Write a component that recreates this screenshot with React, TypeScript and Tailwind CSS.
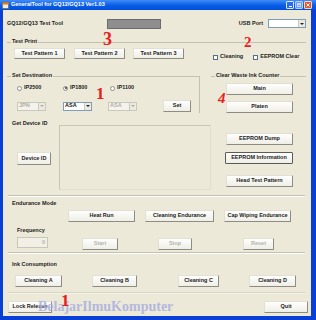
import React from 'react';

type BtnProps = { className?: string; children?: React.ReactNode; disabled?: boolean; focused?: boolean };

function Btn({ className = '', children, disabled, focused }: BtnProps) {
  const edge = focused
    ? 'border border-[#5a5a5a]'
    : 'border border-t-[#e2e0d5] border-l-[#e2e0d5] border-r-[#8c8b84] border-b-[#8c8b84]';
  return (
    <div
      className={`flex shrink-0 items-center justify-center rounded-[1px] bg-linear-to-b from-[#fefefd] to-[#efeee6] ${edge} ${
        disabled ? 'text-[#b5b3a8]' : 'text-[#1c1c1c]'
      } ${className}`}
    >
      {children}
    </div>
  );
}

function Select({ className = '', value, disabled }: { className?: string; value?: string; disabled?: boolean }) {
  return (
    <div
      className={`flex shrink-0 items-stretch border ${
        disabled ? 'border-[#cac8bb] bg-[#f3f2ec] text-[#b0aea3]' : 'border-[#7f9db9] bg-white text-[#111]'
      } ${className}`}
    >
      <span className="flex flex-1 items-center pl-[1px]">{value}</span>
      <span className="flex w-[7px] items-center justify-center border-l border-[#cac8bb] bg-[#eceae0]">
        <svg width="4" height="2" viewBox="0 0 4 2">
          <path d="M0 0h4L2 2z" fill={disabled ? '#b0aea3' : '#222'} />
        </svg>
      </span>
    </div>
  );
}

function Radio({ checked }: { checked?: boolean }) {
  return (
    <span className="flex h-[5px] w-[5px] shrink-0 items-center justify-center rounded-full border border-[#8c8c8c] bg-white">
      {checked && <span className="h-[2px] w-[2px] rounded-full bg-[#3a3a3a]" />}
    </span>
  );
}

function Check({ className = '' }: { className?: string }) {
  return <span className={`block h-[5px] w-[5px] shrink-0 border border-[#52708c] bg-white ${className}`} />;
}

function GroupHead({ label, className = '' }: { label: string; className?: string }) {
  return (
    <div className={`flex h-[6px] items-center ${className}`}>
      <div className="h-0 w-[4px] border-t border-[#c4c1b2]" />
      <span className="px-[1px]">{label}</span>
      <div className="h-0 flex-1 border-t border-[#c4c1b2]" />
    </div>
  );
}

function Separator({ className = '' }: { className?: string }) {
  return <div className={`ml-[5px] h-0 w-[297px] border-t border-b border-t-[#c4c1b2] border-b-white ${className}`} />;
}

export default function App() {
  return (
    <div className="relative h-[320px] w-[316px] overflow-hidden bg-[#0a3fd6] font-['Liberation_Sans',Arial,sans-serif]">
      {/* title bar */}
      <div className="flex h-[10px] items-center bg-linear-to-b from-[#3f8cf8] via-[#0b5ee8] to-[#0050dc] pl-[2px]">
        <svg width="7" height="7" viewBox="0 0 7 7">
          <rect x="0.5" y="0.5" width="6" height="6" fill="#f4efe0" stroke="#7a5a2a" strokeWidth="0.6" />
          <rect x="0.5" y="0.5" width="6" height="2" fill="#e07a1e" />
        </svg>
        <span className="ml-[2px] text-[5.5px] leading-none font-bold text-white">GeneralTool for GQ12/GQ13 Ver1.03</span>
        <div className="mr-[4px] ml-auto flex gap-[1px]">
          <span className="flex h-[8px] w-[8px] items-end justify-center rounded-[1px] border border-[#d8e4fb] bg-[#2a6cf0] pb-[1px]">
            <span className="h-[1px] w-[3px] bg-white" />
          </span>
          <span className="flex h-[8px] w-[8px] items-center justify-center rounded-[1px] border border-[#b7cdf8] bg-[#6a9af2]">
            <span className="h-[4px] w-[4px] border border-t-2 border-[#c9d8f8]" />
          </span>
          <span className="flex h-[8px] w-[8px] items-center justify-center rounded-[1px] border border-[#f3d3c6] bg-[#e05a2e]">
            <svg width="4" height="4" viewBox="0 0 4 4">
              <path d="M0.5 0.5L3.5 3.5M3.5 0.5L0.5 3.5" stroke="#fff" strokeWidth="1" />
            </svg>
          </span>
        </div>
      </div>

      {/* window body */}
      <div className="mr-[5px] ml-[3px] flex h-[306px] flex-col bg-[#ece9d8] text-[5.5px] leading-none font-bold text-[#1c1c1c]">
        <div className="mt-[8px] flex h-[11px] items-center">
          <span className="ml-[4px] w-[100px]">GQ12/GQ13 Test Tool</span>
          <div className="h-[10px] w-[54px] border border-[#6c6c6c] bg-[#8e8e8e]" />
          <span className="ml-auto">USB Port</span>
          <Select className="mr-[5px] ml-[5px] h-[9px] w-[38px]" />
        </div>

        {/* test print */}
        <GroupHead label="Test Print" className="mt-[10px] mr-[5px] ml-[4px]" />
        <div className="mt-[3px] flex h-[11px] items-start">
          <Btn className="ml-[11px] h-[11px] w-[51px]">Test Pattern 1</Btn>
          <Btn className="ml-[9px] h-[11px] w-[51px]">Test Pattern 2</Btn>
          <Btn className="ml-[8px] h-[11px] w-[51px]">Test Pattern 3</Btn>
          <div className="mt-[6px] ml-[29px] flex h-[6px] items-center">
            <Check />
            <span className="ml-[2px]">Cleaning</span>
            <Check className="ml-[10px]" />
            <span className="ml-[2px]">EEPROM Clear</span>
          </div>
        </div>

        {/* destination + waste ink */}
        <div className="mt-[14px] flex">
          <div className="ml-[4px] flex w-[193px] flex-col">
            <GroupHead label="Set Destination" />
            <div className="-mt-[3px] flex flex-col border-r border-[#c4c1b2] pt-[9px] pb-[1px]">
              <div className="ml-[10px] flex h-[6px] items-center">
                <div className="flex w-[46px] items-center">
                  <Radio />
                  <span className="ml-[2px]">IP2500</span>
                </div>
                <div className="flex w-[47px] items-center">
                  <Radio checked />
                  <span className="ml-[2px]">IP1800</span>
                </div>
                <div className="flex items-center">
                  <Radio />
                  <span className="ml-[2px]">IP1100</span>
                </div>
              </div>
              <div className="mt-[9px] flex h-[12px] items-center">
                <Select className="ml-[10px] h-[9px] w-[29px]" value="JPN" disabled />
                <Select className="ml-[17px] h-[9px] w-[29px]" value="ASA" />
                <Select className="ml-[16px] h-[9px] w-[29px]" value="ASA" disabled />
                <Btn className="ml-[26px] h-[12px] w-[28px]">Set</Btn>
              </div>
            </div>
          </div>
          <div className="ml-[11px] flex w-[95px] flex-col">
            <GroupHead label="Clear Waste Ink Counter" />
            <Btn className="mt-[4px] ml-[15px] h-[12px] w-[67px]">Main</Btn>
            <Btn className="mt-[6px] ml-[15px] h-[12px] w-[67px]">Platen</Btn>
          </div>
        </div>

        {/* device id */}
        <div className="mt-[8px] flex items-start">
          <div className="ml-[9px] flex w-[47px] flex-col">
            <span className="h-[6px]">Get Device ID</span>
            <Btn className="mt-[25px] ml-[5px] h-[13px] w-[34px]">Device ID</Btn>
          </div>
          <div className="mt-[4px] h-[65px] w-[152px] border border-t-[#c9c6b7] border-l-[#c9c6b7] border-r-[#e2dfd1] border-b-[#e2dfd1]" />
          <div className="mt-[12px] ml-[15px] flex flex-col">
            <Btn className="h-[12px] w-[67px]">EEPROM Dump</Btn>
            <Btn className="mt-[7px] -ml-[1px] h-[12px] w-[68px]" focused>
              EEPROM Information
            </Btn>
            <Btn className="mt-[11px] h-[12px] w-[67px]">Head Test Pattern</Btn>
          </div>
        </div>

        <Separator className="mt-[5px]" />

        {/* endurance */}
        <span className="mt-[4px] ml-[9px] h-[6px]">Endurance Mode</span>
        <div className="mt-[3px] flex h-[12px]">
          <Btn className="ml-[65px] h-[12px] w-[67px]">Heat Run</Btn>
          <Btn className="ml-[10px] h-[12px] w-[69px]">Cleaning Endurance</Btn>
          <Btn className="ml-[10px] h-[12px] w-[67px]">Cap Wiping Endurance</Btn>
        </div>
        <span className="mt-[6px] ml-[14px] h-[6px]">Frequency</span>
        <div className="mt-[3px] flex h-[13px] items-start">
          <div className="ml-[14px] flex h-[11px] w-[31px] items-center justify-end border border-[#c9c6b7] bg-[#f1efe6] pr-[2px] text-[#b5b3a8]">
            0
          </div>
          <Btn className="mt-[1px] ml-[34px] h-[12px] w-[36px]" disabled>
            Start
          </Btn>
          <Btn className="mt-[1px] ml-[40px] h-[12px] w-[34px]" disabled>
            Stop
          </Btn>
          <Btn className="mt-[1px] ml-[51px] h-[12px] w-[31px]" disabled>
            Reset
          </Btn>
        </div>

        <Separator className="mt-[2px]" />

        {/* ink consumption */}
        <span className="mt-[8px] ml-[9px] h-[6px]">Ink Consumption</span>
        <div className="mt-[7px] flex h-[12px]">
          <Btn className="ml-[12px] h-[12px] w-[47px]">Cleaning A</Btn>
          <Btn className="ml-[30px] h-[12px] w-[45px]">Cleaning B</Btn>
          <Btn className="ml-[41px] h-[12px] w-[41px]">Cleaning C</Btn>
          <Btn className="ml-[30px] h-[12px] w-[47px]">Cleaning D</Btn>
        </div>

        <Separator className="mt-[5px] opacity-50" />

        <div className="mt-[7px] flex h-[12px]">
          <Btn className="ml-[5px] h-[12px] w-[44px]">Lock Release</Btn>
          <Btn className="mr-[3px] ml-auto h-[12px] w-[44px]">Quit</Btn>
        </div>
      </div>

      {/* annotations laid over the screenshot */}
      <span className="absolute top-[300px] left-[38px] font-['Liberation_Serif',serif] text-[14px] leading-none font-bold text-[#a9aee2]/85">
        BelajarIlmuKomputer
      </span>
      <span className="absolute top-[30px] left-[103px] font-['Liberation_Serif',serif] text-[18px] leading-none font-bold text-[#e8201c]">
        3
      </span>
      <span className="absolute top-[35px] left-[244px] font-['Liberation_Serif',serif] text-[15px] leading-none font-bold text-[#e8201c]">
        2
      </span>
      <span className="absolute top-[85px] left-[96px] font-['Liberation_Serif',serif] text-[17px] leading-none font-bold text-[#e8201c]">
        1
      </span>
      <span className="absolute top-[91px] left-[218px] font-['Liberation_Serif',serif] text-[15px] leading-none font-bold text-[#e8201c] italic">
        4
      </span>
      <span className="absolute top-[292px] left-[61px] font-['Liberation_Serif',serif] text-[17px] leading-none font-bold text-[#e8201c]">
        1
      </span>
    </div>
  );
}
